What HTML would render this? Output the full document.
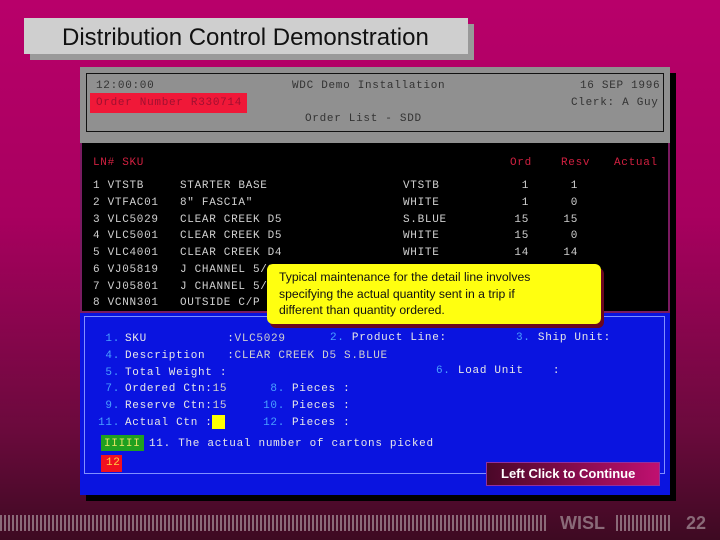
<!DOCTYPE html>
<html><head><meta charset="utf-8"><style>
*{margin:0;padding:0;box-sizing:border-box}
body{width:720px;height:540px;overflow:hidden;position:relative;background:linear-gradient(180deg,#b8006a 0%,#a8005f 40%,#6a0a3c 80%,#3e0a22 100%);font-family:"Liberation Sans",sans-serif}
.a{position:absolute;white-space:pre}
.m{font-family:"Liberation Mono",monospace;font-size:11px;line-height:14px;letter-spacing:0.7px}
.g{color:#d0d0d0}.r{color:#d02040}.k{color:#333}.w{color:#e8e8e8}.c{color:#4aa0ff}
.bars{position:absolute;background:repeating-linear-gradient(90deg,#8a6a78 0,#8a6a78 2px,transparent 2px,transparent 4px)}
</style></head><body>
<div class="a" style="left:30px;top:24px;width:444px;height:36px;background:#999"></div>
<div class="a" style="left:24px;top:18px;width:444px;height:36px;background:#cfcfcf"></div>
<div class="a" style="left:62px;top:24px;font-size:24px;color:#111">Distribution Control Demonstration</div>

<div class="a" style="left:86px;top:73px;width:590px;height:428px;background:#000"></div>
<div class="a" style="left:80px;top:67px;width:590px;height:76px;background:#909090"></div>
<div class="a" style="left:86px;top:73px;width:578px;height:59px;border:1px solid #111"></div>
<div class="a m k" style="left:96px;top:79px">12:00:00</div>
<div class="a m k" style="left:292px;top:79px">WDC Demo Installation</div>
<div class="a m k" style="left:580px;top:79px">16 SEP 1996</div>
<div class="a" style="left:90px;top:93px;width:157px;height:20px;background:#f01838"></div>
<div class="a m" style="left:96px;top:96px;color:#a01030">Order Number R330714</div>
<div class="a m k" style="left:571px;top:96px">Clerk: A Guy</div>
<div class="a m k" style="left:305px;top:112px">Order List - SDD</div>

<div class="a" style="left:80px;top:143px;width:590px;height:170px;background:#000;border:2px solid #7a1a60;border-top:none"></div>
<div class="a m r" style="left:93px;top:156px">LN# SKU</div>
<div class="a m r" style="left:510px;top:156px">Ord</div>
<div class="a m r" style="left:561px;top:156px">Resv</div>
<div class="a m r" style="left:614px;top:156px">Actual</div>
<div class="a m g" style="left:93px;top:178px;line-height:16.75px">1 VTSTB
2 VTFAC01
3 VLC5029
4 VLC5001
5 VLC4001
6 VJ05819
7 VJ05801
8 VCNN301</div>
<div class="a m g" style="left:180px;top:178px;line-height:16.75px">STARTER BASE
8" FASCIA"
CLEAR CREEK D5
CLEAR CREEK D5
CLEAR CREEK D4
J CHANNEL 5/8
J CHANNEL 5/8
OUTSIDE C/P</div>
<div class="a m g" style="left:403px;top:178px;line-height:16.75px">VTSTB
WHITE
S.BLUE
WHITE
WHITE</div>
<div class="a m g" style="left:509px;top:178px;line-height:16.75px;text-align:right;width:20px">1
1
15
15
14</div>
<div class="a m g" style="left:558px;top:178px;line-height:16.75px;text-align:right;width:20px">1
0
15
0
14</div>

<div class="a" style="left:80px;top:313px;width:590px;height:182px;background:#0a14e0"></div>
<div class="a" style="left:84px;top:316px;width:581px;height:158px;border:1px solid #8090ff"></div>
<div class="a m c" style="left:90px;top:331px;line-height:16.75px;text-align:right;width:30px">1.
4.
5.
7.
9.
11.</div>
<div class="a m w" style="left:125px;top:331px;line-height:16.75px">SKU           :<span class="g">VLC5029</span>
Description   :<span class="g">CLEAR CREEK D5 S.BLUE</span>
Total Weight :
Ordered Ctn:<span class="g">15</span>
Reserve Ctn:<span class="g">15</span>
Actual Ctn :</div>
<div class="a" style="left:212px;top:415px;width:13px;height:14px;background:#ffff00"></div>
<div class="a m c" style="left:255px;top:381px;line-height:16.75px;text-align:right;width:30px">8.
10.
12.</div>
<div class="a m w" style="left:292px;top:381px;line-height:16.75px">Pieces :
Pieces :
Pieces :</div>
<div class="a m" style="left:330px;top:331px"><span class="c">2.</span> <span class="w">Product Line:</span></div>
<div class="a m" style="left:516px;top:331px"><span class="c">3.</span> <span class="w">Ship Unit:</span></div>
<div class="a m" style="left:436px;top:364px"><span class="c">6.</span> <span class="w">Load Unit    :</span></div>
<div class="a" style="left:101px;top:435px;width:43px;height:16px;background:#20a020"></div>
<div class="a m" style="left:104px;top:437px;color:#e0e060">IIIII</div>
<div class="a m w" style="left:149px;top:437px">11. The actual number of cartons picked</div>
<div class="a" style="left:101px;top:455px;width:21px;height:17px;background:#f01020"></div>
<div class="a m" style="left:106px;top:456px;color:#ffd040">12</div>

<div class="a" style="left:486px;top:462px;width:174px;height:24px;background:linear-gradient(90deg,#4a0828,#c01070);border:1px solid #9030a0"></div>
<div class="a" style="left:501px;top:466px;font-size:13px;font-weight:bold;color:#fff">Left Click to Continue</div>

<div class="a" style="left:270px;top:268px;width:334px;height:60px;background:#6a0820;border-radius:6px"></div>
<div class="a" style="left:267px;top:264px;width:334px;height:60px;background:#ffff10;border-radius:6px"></div>
<div class="a" style="left:279px;top:269px;font-size:12.2px;line-height:16.5px;color:#111">Typical maintenance for the detail line involves
specifying the actual quantity sent in a trip if
different than quantity ordered.</div>

<div class="bars" style="left:0;top:515px;width:548px;height:16px"></div>
<div class="a" style="left:560px;top:512px;font-size:18px;font-weight:bold;color:#8a6a78;line-height:22px">WISL</div>
<div class="bars" style="left:616px;top:515px;width:56px;height:16px"></div>
<div class="a" style="left:686px;top:512px;font-size:18px;font-weight:bold;color:#8a6a78;line-height:22px">22</div>
</body></html>
